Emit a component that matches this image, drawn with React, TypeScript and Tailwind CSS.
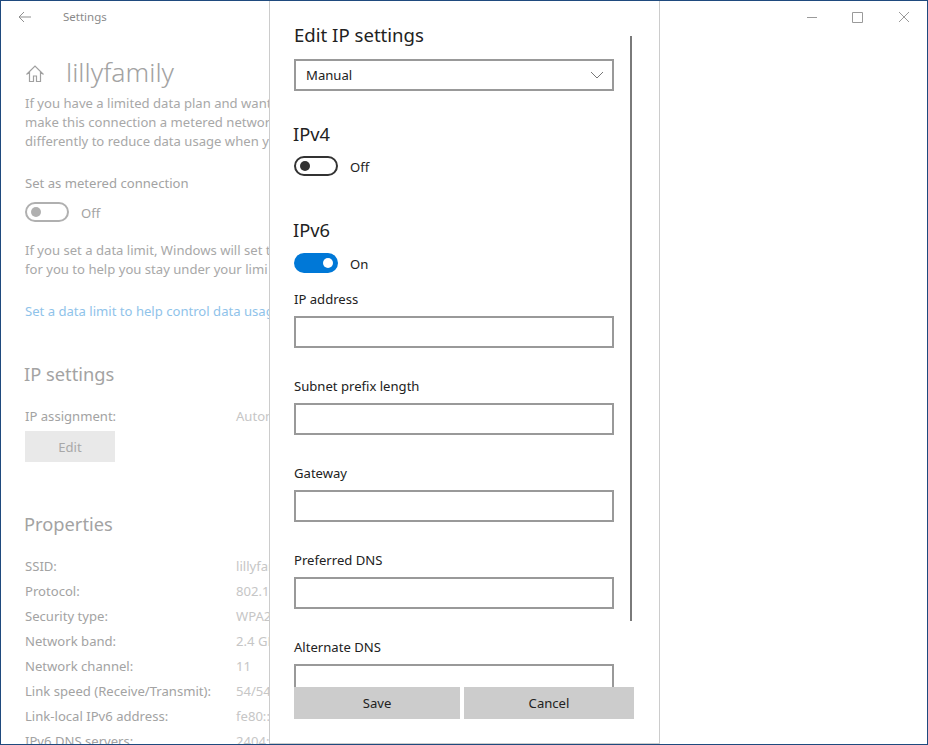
import React from "react";

const font = { fontFamily: '"Noto Sans", "Open Sans", sans-serif' };

function Row({ label, value }: { label: string; value: string }) {
  return (
    <div className="flex h-[25px] items-center whitespace-nowrap text-[13.1px]">
      <span className="w-[211px] shrink-0 text-[#a3a3a3]">{label}</span>
      <span className="text-[#c6c6c6]">{value}</span>
    </div>
  );
}

function Toggle({ on, color, label }: { on: boolean; color: string; label: string }) {
  return (
    <div className="flex h-[20px] items-center gap-3">
      {on ? (
        <span className="flex h-[20px] w-[44px] items-center justify-end rounded-full bg-[#0078d7] pr-[5px]">
          <span className="h-[10px] w-[10px] rounded-full bg-white" />
        </span>
      ) : (
        <span
          className="flex h-[20px] w-[44px] items-center rounded-full border-2 pl-[4px]"
          style={{ borderColor: color }}
        >
          <span className="h-[10px] w-[10px] rounded-full" style={{ backgroundColor: color }} />
        </span>
      )}
      <span className="pt-[4px] text-[13.1px]" style={{ color: color === "#333333" || on ? "#222222" : "#a3a3a3" }}>
        {label}
      </span>
    </div>
  );
}

function Field({ label, last }: { label: string; last?: boolean }) {
  return (
    <div className={last ? "h-[52px] shrink-0" : "h-[87px] shrink-0"}>
      <div className="h-[25px] text-[13.1px] leading-[25px] text-[#222222]">{label}</div>
      <div
        className={
          last
            ? "mt-[4px] h-[23px] border-2 border-b-0 border-[#999999] bg-white"
            : "mt-[4px] h-[32px] border-2 border-[#999999] bg-white"
        }
      />
    </div>
  );
}

export default function App() {
  return (
    <div style={font} className="relative h-[745px] w-[928px] overflow-hidden border border-[#1f4a7e] bg-white">
      <div className="flex flex-col pl-[24px]">
        <div className="-ml-[7px] flex h-[31px] items-center">
          <svg width="14" height="12" viewBox="0 0 14 12" fill="none" stroke="#8f8f8f" strokeWidth="1">
            <path d="M13 6H1M6 1L1 6l5 5" />
          </svg>
          <span className="ml-[31px] text-[11.5px] text-[#8a8a8a]">Settings</span>
        </div>
        <div className="mt-[24px] flex h-[36px] items-center">
          <svg width="20" height="20" viewBox="0 0 20 20" fill="none" stroke="#a0a0a0" strokeWidth="1.2">
            <path d="M1.5 10.5L10 2l8.500 8.500M4.500 8v9.500h4V12h3v5.500h4V8" />
          </svg>
          <span className="ml-[21px] pb-[4px] text-[26.5px] leading-none font-light text-[#a3a3a3]">lillyfamily</span>
        </div>
        <div className="mt-[2px] whitespace-nowrap text-[13.1px] leading-[19px] text-[#a8a8a8]">
          <div>If you have a limited data plan and want</div>
          <div>make this connection a metered network</div>
          <div>differently to reduce data usage when y</div>
        </div>
        <div className="mt-[23px] text-[13.1px] leading-[19px] text-[#a3a3a3]">Set as metered connection</div>
        <div className="mt-[9px]">
          <Toggle on={false} color="#b0b0b0" label="Off" />
        </div>
        <div className="mt-[19px] whitespace-nowrap text-[13.1px] leading-[19px] text-[#a8a8a8]">
          <div>If you set a data limit, Windows will set t</div>
          <div>for you to help you stay under your limi</div>
        </div>
        <div className="mt-[23px] whitespace-nowrap text-[13.1px] leading-[19px] text-[#8fc3ea]">
          Set a data limit to help control data usag
        </div>
        <div className="mt-[39px] -ml-[1px] text-[18.3px] leading-[28px] text-[#a3a3a3]">IP settings</div>
        <div className="mt-[19px] flex h-[19px] items-center whitespace-nowrap text-[13.1px]">
          <span className="w-[211px] shrink-0 text-[#a3a3a3]">IP assignment:</span>
          <span className="text-[#c6c6c6]">Automatic (DHCP)</span>
        </div>
        <div className="mt-[5px] flex h-[31px] w-[90px] items-center justify-center bg-[#e9e9e9] pt-[2px] text-[13.1px] text-[#a8a8a8]">
          Edit
        </div>
        <div className="mt-[48px] -ml-[1px] text-[18.3px] leading-[28px] text-[#a3a3a3]">Properties</div>
        <div className="mt-[16px]">
          <Row label="SSID:" value="lillyfamily" />
          <Row label="Protocol:" value="802.11n" />
          <Row label="Security type:" value="WPA2" />
          <Row label="Network band:" value="2.4 GHz" />
          <Row label="Network channel:" value="11" />
          <Row label="Link speed (Receive/Transmit):" value="54/54" />
          <Row label="Link-local IPv6 address:" value="fe80::" />
          <Row label="IPv6 DNS servers:" value="2404:" />
        </div>
      </div>

      <div className="absolute top-0 -left-px flex h-full w-px flex-col">
        <div className="h-[371px] bg-[#1a6ca5]" />
        <div className="h-[25px] bg-[#a8a8a8]" />
        <div className="flex-1 bg-[#4a4a4a]" />
      </div>
      <div className="absolute -bottom-px left-0 h-px w-[165px] bg-[#555555]" />

      <svg className="absolute top-0 right-0" width="120" height="34" viewBox="0 0 120 34" fill="none" stroke="#9a9a9a" strokeWidth="1">
        <path d="M0 16.500h10M45.500 11.500h10v10h-10zM92 11l10 10M102 11l-10 10" />
      </svg>

      <div className="absolute top-0 bottom-0 left-[268px] w-[391px] border-x border-b border-[#cccccc] bg-white">
        <div className="flex h-full flex-col overflow-hidden pl-[24px]">
          <div className="mt-[19px] text-[18.6px] leading-[30px] text-[#222222]">Edit IP settings</div>
          <div className="mt-[9px] flex h-[32px] w-[320px] shrink-0 items-center justify-between border-2 border-[#999999] pr-[8px] pl-[10px] text-[13.1px] text-[#222222]">
            <span className="pt-[2px]">Manual</span>
            <svg width="14" height="8" viewBox="0 0 14 8" fill="none" stroke="#777777" strokeWidth="1">
              <path d="M1 1l6 6 6-6" />
            </svg>
          </div>
          <div className="mt-[28px] -ml-[1px] text-[18.3px] leading-[30px] text-[#222222]">IPv4</div>
          <div className="mt-[7px]">
            <Toggle on={false} color="#333333" label="Off" />
          </div>
          <div className="mt-[39px] -ml-[1px] text-[18.3px] leading-[30px] text-[#222222]">IPv6</div>
          <div className="mt-[8px]">
            <Toggle on color="#0078d7" label="On" />
          </div>
          <div className="mt-[14px] w-[320px]">
            <Field label="IP address" />
            <Field label="Subnet prefix length" />
            <Field label="Gateway" />
            <Field label="Preferred DNS" />
            <Field label="Alternate DNS" last />
          </div>
        </div>
        <div className="absolute top-[35px] left-[360px] h-[585px] w-[2px] bg-[#7a7a7a]" />
        <div className="absolute top-[686px] left-[24px] flex gap-[4px] text-[13.1px] text-[#222222]">
          <div className="flex h-[32px] w-[166px] items-center justify-center bg-[#cccccc] pt-[2px]">Save</div>
          <div className="flex h-[32px] w-[170px] items-center justify-center bg-[#cccccc] pt-[2px]">Cancel</div>
        </div>
      </div>
    </div>
  );
}
